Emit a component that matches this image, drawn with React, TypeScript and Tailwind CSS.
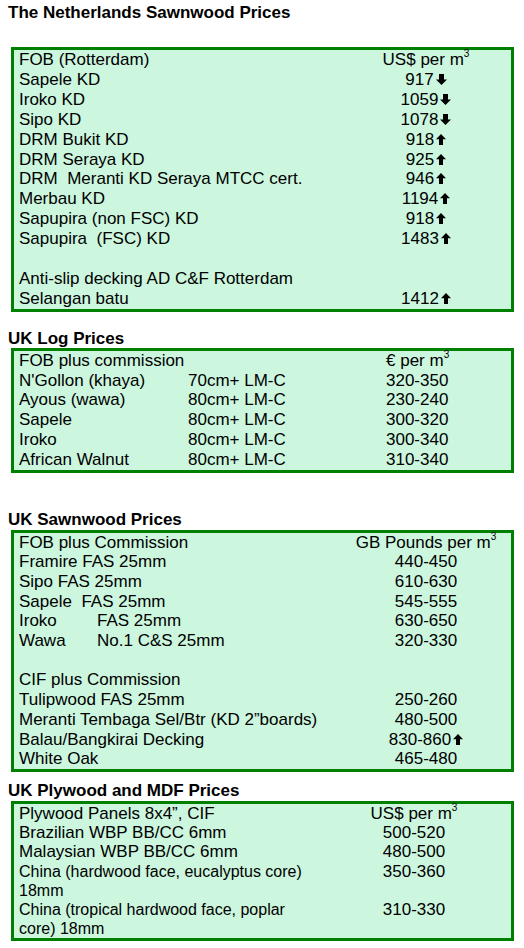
import React from "react";

const Down = () => (
  <svg width="11" height="11" viewBox="0 0 11 11" className="inline-block ml-[2px] align-[0px]">
    <path d="M3 0H8V5.5H11L5.5 11L0 5.5H3Z" fill="#000" />
  </svg>
);
const Up = () => (
  <svg width="10" height="11" viewBox="0 0 10 11" className="inline-block ml-[2px] align-[0px]">
    <path d="M5 0L10 5.2H7V11H3V5.2H0Z" fill="#000" />
  </svg>
);

const M3 = () => <sup className="text-[10px] relative -top-[8px]">3</sup>;

type R1 = { l: string; p?: string; a?: "u" | "d" };

const nl: R1[] = [
  { l: "Sapele KD", p: "917", a: "d" },
  { l: "Iroko KD", p: "1059", a: "d" },
  { l: "Sipo KD", p: "1078", a: "d" },
  { l: "DRM Bukit KD", p: "918", a: "u" },
  { l: "DRM Seraya KD", p: "925", a: "u" },
  { l: "DRM  Meranti KD Seraya MTCC cert.", p: "946", a: "u" },
  { l: "Merbau KD", p: "1194", a: "u" },
  { l: "Sapupira (non FSC) KD", p: "918", a: "u" },
  { l: "Sapupira  (FSC) KD", p: "1483", a: "u" },
  { l: "\u00a0" },
  { l: "Anti-slip decking AD C&F Rotterdam" },
  { l: "Selangan batu", p: "1412", a: "u" },
];

const logs = [
  ["N'Gollon (khaya)", "70cm+ LM-C", "320-350"],
  ["Ayous (wawa)", "80cm+ LM-C", "230-240"],
  ["Sapele", "80cm+ LM-C", "300-320"],
  ["Iroko", "80cm+ LM-C", "300-340"],
  ["African Walnut", "80cm+ LM-C", "310-340"],
];

function Price({ p, a }: { p?: string; a?: "u" | "d" }) {
  return (
    <div className="w-[170px] shrink-0 text-center whitespace-nowrap">
      {p}
      {a === "u" ? <Up /> : a === "d" ? <Down /> : null}
    </div>
  );
}

const boxCls =
  "ml-[11px] w-[503px] border-[3px] border-[#008000] bg-[#ccf6de] pl-[5px]";

export default function App() {
  return (
    <div className="w-[524px] min-h-[948px] bg-white text-black text-[17px] font-['Liberation_Sans',Arial,sans-serif] pt-[3px]">
      <h2 className="pl-[8px] font-bold leading-[20px]">The Netherlands Sawnwood Prices</h2>
      <div className={boxCls + " mt-[24px] leading-[19.9px]"}>
        <div className="flex">
          <div className="flex-1">FOB (Rotterdam)</div>
          <div className="w-[170px] shrink-0 text-center whitespace-nowrap">
            US$ per m<M3 />
          </div>
        </div>
        {nl.map((r, i) => (
          <div key={i} className="flex">
            <div className="flex-1 whitespace-pre">{r.l}</div>
            <Price p={r.p} a={r.a} />
          </div>
        ))}
      </div>

      <h2 className="pl-[8px] font-bold leading-[20px] mt-[17px]">UK Log Prices</h2>
      <div className={boxCls + " -mt-[1px] leading-[19.8px]"}>
        <div className="grid grid-cols-[169px_198px_1fr]">
          <div className="col-span-2">FOB plus commission</div>
          <div>
            € per m<M3 />
          </div>
          {logs.map((r, i) => (
            <React.Fragment key={i}>
              <div>{r[0]}</div>
              <div>{r[1]}</div>
              <div>{r[2]}</div>
            </React.Fragment>
          ))}
        </div>
      </div>

      <h2 className="pl-[8px] font-bold leading-[20px] mt-[37px]">UK Sawnwood Prices</h2>
      <div className={boxCls + " leading-[19.7px]"}>
        <div className="flex">
          <div className="flex-1">FOB plus Commission</div>
          <div className="w-[170px] shrink-0 text-center whitespace-nowrap">
            GB Pounds per m<M3 />
          </div>
        </div>
        <div className="flex">
          <div className="flex-1">Framire FAS 25mm</div>
          <Price p="440-450" />
        </div>
        <div className="flex">
          <div className="flex-1">Sipo FAS 25mm</div>
          <Price p="610-630" />
        </div>
        <div className="flex">
          <div className="flex-1 whitespace-pre">Sapele  FAS 25mm</div>
          <Price p="545-555" />
        </div>
        <div className="flex">
          <div className="flex-1">
            <span className="inline-block w-[78px]">Iroko</span>FAS 25mm
          </div>
          <Price p="630-650" />
        </div>
        <div className="flex">
          <div className="flex-1">
            <span className="inline-block w-[78px]">Wawa</span>No.1 C&amp;S 25mm
          </div>
          <Price p="320-330" />
        </div>
        <div>&nbsp;</div>
        <div>CIF plus Commission</div>
        <div className="flex">
          <div className="flex-1">Tulipwood FAS 25mm</div>
          <Price p="250-260" />
        </div>
        <div className="flex">
          <div className="flex-1">Meranti Tembaga Sel/Btr (KD 2”boards)</div>
          <Price p="480-500" />
        </div>
        <div className="flex">
          <div className="flex-1">Balau/Bangkirai Decking</div>
          <Price p="830-860" a="u" />
        </div>
        <div className="flex">
          <div className="flex-1">White Oak</div>
          <Price p="465-480" />
        </div>
      </div>

      <h2 className="pl-[8px] font-bold leading-[20px] mt-[9px]">UK Plywood and MDF Prices</h2>
      <div className={boxCls + " leading-[19.2px]"}>
        {[
          ["Plywood Panels 8x4”, CIF", ""],
          ["Brazilian WBP BB/CC 6mm", "500-520"],
          ["Malaysian WBP BB/CC 6mm", "480-500"],
          ["China (hardwood face, eucalyptus core) 18mm", "350-360"],
          ["China (tropical hardwood face, poplar core) 18mm", "310-330"],
        ].map((r, i) => (
          <div key={i} className="flex">
            <div className={i >= 3 ? "w-[290px] shrink-0 text-[16px]" : "w-[290px] shrink-0"}>{r[0]}</div>
            <div className="ml-[30px] w-[150px] text-center whitespace-nowrap">
              {i === 0 ? (
                <>
                  US$ per m<M3 />
                </>
              ) : (
                r[1]
              )}
            </div>
          </div>
        ))}
      </div>
    </div>
  );
}
